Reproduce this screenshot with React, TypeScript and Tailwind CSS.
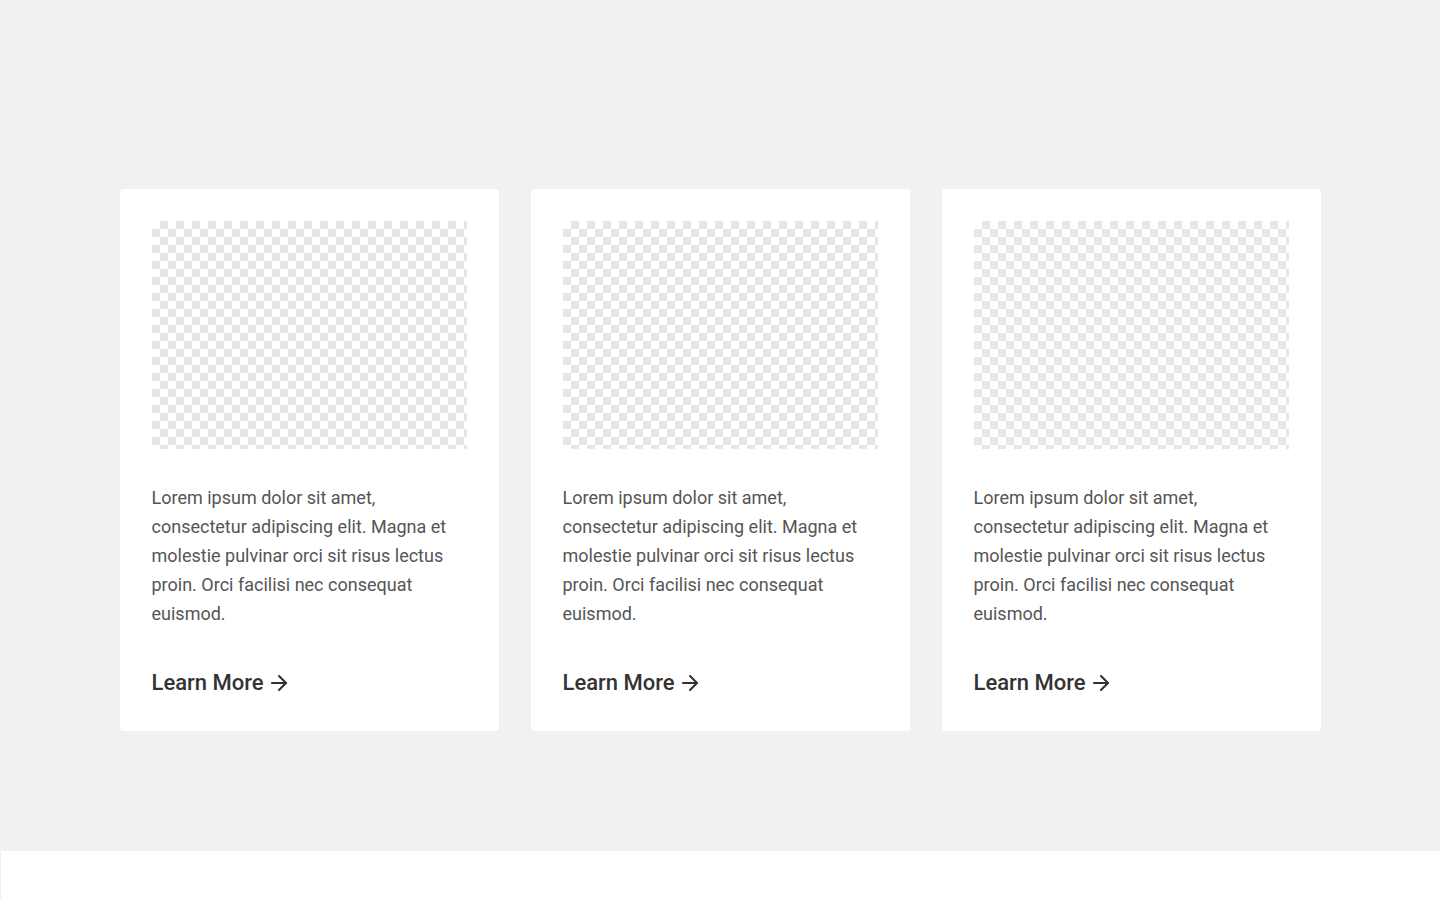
import { ArrowRight } from 'lucide-react'

const text =
  'Lorem ipsum dolor sit amet, consectetur adipiscing elit. Magna et molestie pulvinar orci sit risus lectus proin. Orci facilisi nec consequat euismod.'

function Placeholder() {
  return (
    <div
      className="h-[228px] w-full bg-white"
      style={{
        backgroundImage:
          'linear-gradient(45deg, #e6e6e6 25%, transparent 25%, transparent 75%, #e6e6e6 75%), linear-gradient(45deg, #e6e6e6 25%, transparent 25%, transparent 75%, #e6e6e6 75%)',
        backgroundSize: '16px 16px',
        backgroundPosition: '0 0, 8px 8px',
      }}
    />
  )
}

function Card() {
  return (
    <div className="flex w-[379px] flex-col rounded bg-white p-8">
      <Placeholder />
      <p className="mt-[34px] max-w-[300px] text-[18px] leading-[29px] text-[#555]">{text}</p>
      <a href="#" className="mt-[42px] flex items-center gap-[3px] text-[22px] font-medium leading-[26px] text-[#333]">
        Learn More
        <ArrowRight className="h-6 w-6" strokeWidth={2.1} />
      </a>
      <div className="h-[3px]" />
    </div>
  )
}

export default function App() {
  return (
    <div className="min-h-screen bg-[#f1f1f1] font-['Roboto',sans-serif]">
      <section className="flex justify-center gap-8 pb-[120px] pt-[189px]">
        <Card />
        <Card />
        <Card />
      </section>
      <footer className="ml-[1px] h-[49px] bg-white" />
    </div>
  )
}
